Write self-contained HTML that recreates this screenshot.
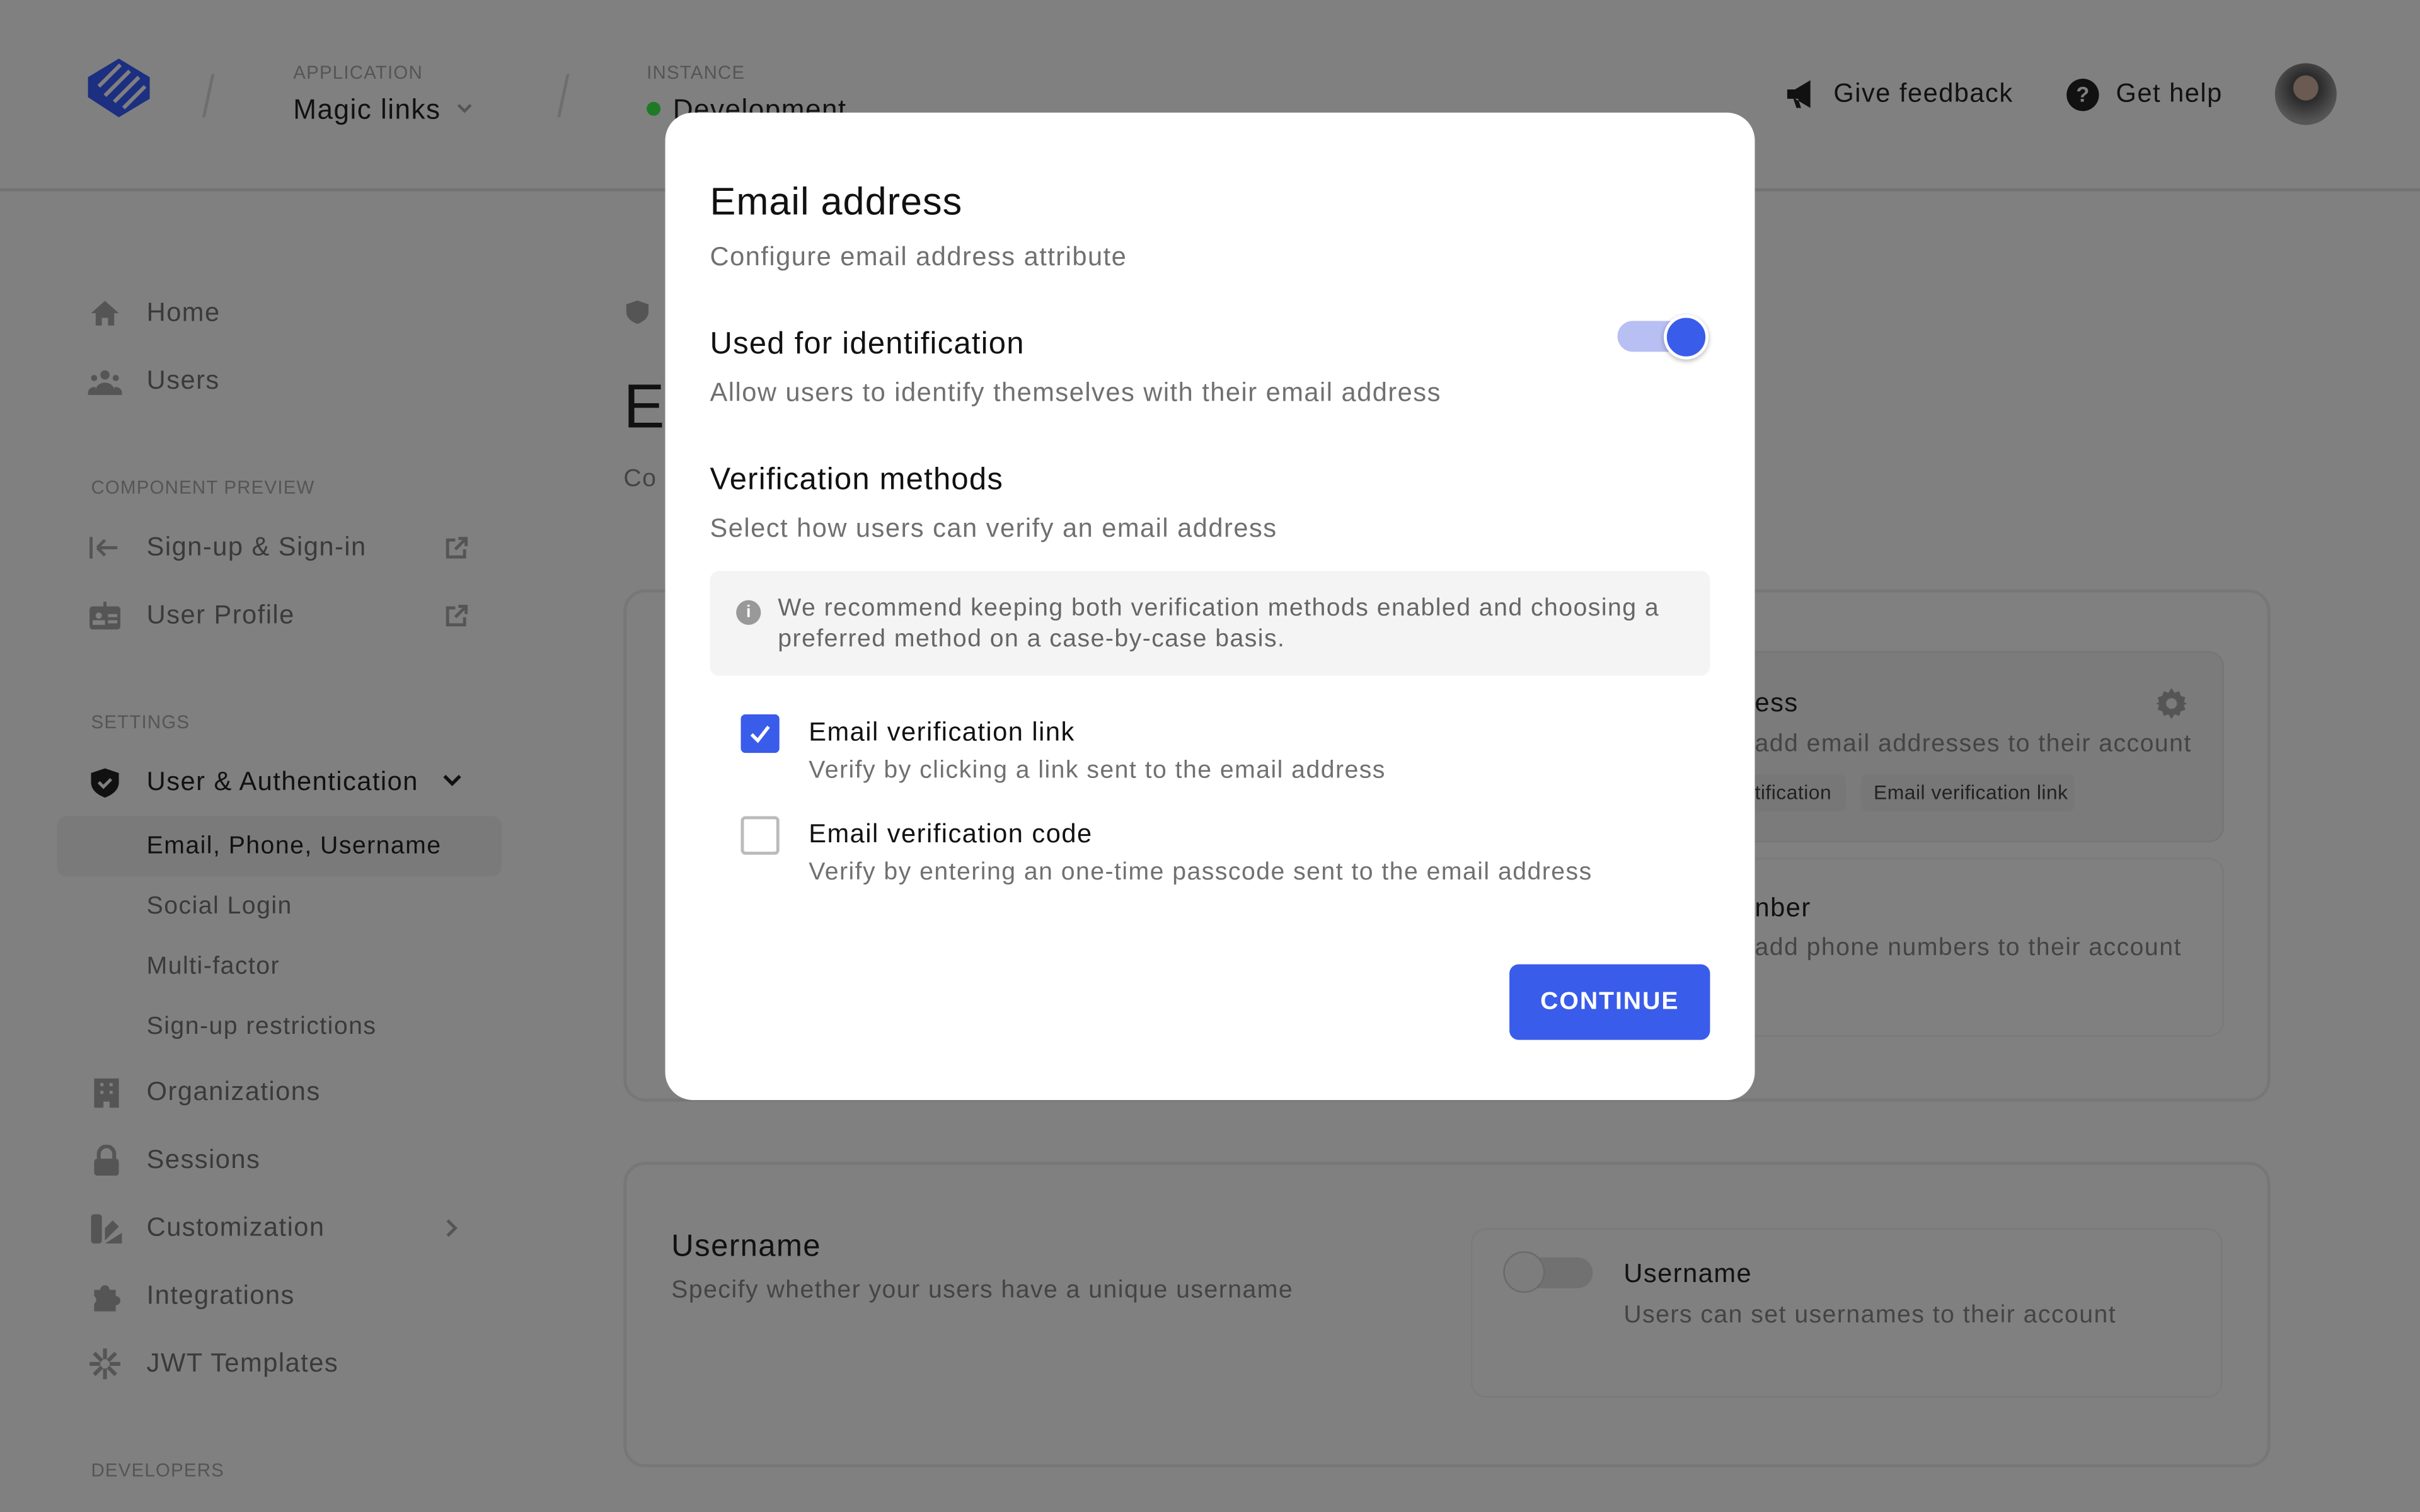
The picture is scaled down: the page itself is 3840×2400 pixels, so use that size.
<!DOCTYPE html>
<html><head><meta charset="utf-8"><style>
*{box-sizing:border-box;margin:0;padding:0}
html,body{width:3840px;height:2400px;overflow:hidden;background:#808080}
#s{position:absolute;left:0;top:0;width:1568px;height:980px;transform:scale(2.44898);transform-origin:0 0;font-family:"Liberation Sans",sans-serif;background:#808080;color:#111;letter-spacing:.6px}
.a{position:absolute;white-space:nowrap}
.nav{font-size:17px;color:#3a3a3a;margin-top:1px}
.lab{font-size:12px;color:#555;letter-spacing:.5px}
.ic{position:absolute;width:20px;height:20px;fill:#555}
.sub{font-size:16px;color:#3a3a3a;margin-top:1px}
.card{position:absolute;border:2px solid #777;border-radius:14px}
.m{font-size:17px;margin-top:1px}
.g{color:#707070}
</style></head><body><div id="s">
<!-- header -->
<div class="a" style="left:0;top:122px;width:1568px;height:2px;background:#737373"></div>
<svg class="a" style="left:56px;top:36px" width="42" height="42" viewBox="0 0 42 42"><path d="M21 2 L41 14 V28 L21 40 L1 27 V14 Z" fill="#1c2f80"/><path d="M8 20 L22 6 M12 26 L28 10 M18 30 L34 14 M24 34 L38 20" stroke="#7f7f7f" stroke-width="2.5"/></svg>
<div class="a" style="left:134px;top:48px;width:2px;height:28px;background:#6e6e6e;transform:skewX(-12deg)"></div>
<div class="a" style="left:364px;top:48px;width:2px;height:28px;background:#6e6e6e;transform:skewX(-12deg)"></div>
<div class="a lab" style="left:190px;top:40px">APPLICATION</div>
<div class="a" style="left:190px;top:61px;font-size:18px;color:#111">Magic links</div>
<svg class="a" style="left:295px;top:66px" width="12" height="8" viewBox="0 0 12 8"><path d="M2 2l4 4 4-4" stroke="#555" stroke-width="1.8" fill="none"/></svg>
<div class="a lab" style="left:419px;top:40px">INSTANCE</div>
<div class="a" style="left:419px;top:66px;width:9px;height:9px;border-radius:50%;background:#1e7a24"></div>
<div class="a" style="left:436px;top:61px;font-size:18px;color:#111">Development</div>
<svg class="a" style="left:1156px;top:51px" width="22" height="20" viewBox="0 0 22 20"><path d="M2 7h5l10-6v18L7 13H2z M6 13l2 6h3l-2-6z" fill="#111"/></svg>
<div class="a" style="left:1188px;top:51px;font-size:17px;color:#111">Give feedback</div>
<div class="a" style="left:1339px;top:51px;width:21px;height:21px;border-radius:50%;background:#111;color:#808080;font-size:14px;font-weight:bold;text-align:center;line-height:21px;letter-spacing:0">?</div>
<div class="a" style="left:1371px;top:51px;font-size:17px;color:#111">Get help</div>
<div class="a" style="left:1474px;top:41px;width:40px;height:40px;border-radius:50%;background:radial-gradient(circle at 50% 40%,#6b5a52 0 25%,#2a2a2a 27%,#555 70%)"></div>
<!-- sidebar -->
<svg class="ic" style="left:58px;top:193px" viewBox="0 0 20 20"><path d="M10 2L1 10h3v8h4v-5h4v5h4v-8h3z"/></svg>
<div class="a nav" style="left:95px;top:192px">Home</div>
<svg class="ic" style="left:57px;top:237px;width:22px" viewBox="0 0 22 20"><circle cx="11" cy="6" r="3"/><circle cx="4" cy="8" r="2"/><circle cx="18" cy="8" r="2"/><path d="M5 19v-3a6 5 0 0 1 12 0v3zM0 19v-2a4 4 0 0 1 5-3v5zM22 19v-2a4 4 0 0 0-5-3v5z"/></svg>
<div class="a nav" style="left:95px;top:236px">Users</div>
<div class="a lab" style="left:59px;top:309px">COMPONENT PREVIEW</div>
<svg class="ic" style="left:58px;top:345px" viewBox="0 0 20 20"><path d="M1 3v14" stroke="#555" stroke-width="2"/><path d="M5 10h13M5 10l5-5M5 10l5 5" stroke="#555" stroke-width="2" fill="none"/></svg>
<div class="a nav" style="left:95px;top:344px">Sign-up &amp; Sign-in</div>
<svg class="ic" style="left:288px;top:347px;width:16px;height:16px" viewBox="0 0 16 16"><path d="M7 3H2v11h11V9M9 2h5v5M14 2L7 9" stroke="#555" stroke-width="2" fill="none"/></svg>
<svg class="ic" style="left:58px;top:389px" viewBox="0 0 20 20"><rect x="0" y="4" width="20" height="15" rx="2"/><rect x="9" y="1" width="2" height="4"/><circle cx="6" cy="10" r="2" fill="#808080"/><rect x="2" y="13" width="8" height="3" fill="#808080"/><rect x="12" y="9" width="6" height="2" fill="#808080"/><rect x="12" y="13" width="6" height="2" fill="#808080"/></svg>
<div class="a nav" style="left:95px;top:388px">User Profile</div>
<svg class="ic" style="left:288px;top:391px;width:16px;height:16px" viewBox="0 0 16 16"><path d="M7 3H2v11h11V9M9 2h5v5M14 2L7 9" stroke="#555" stroke-width="2" fill="none"/></svg>
<div class="a lab" style="left:59px;top:461px">SETTINGS</div>
<svg class="ic" style="left:58px;top:497px;fill:#111" viewBox="0 0 20 20"><path d="M10 1l9 3v6c0 5-4 8-9 10C5 18 1 15 1 10V4z"/><path d="M6 10l3 3 5-5" stroke="#808080" stroke-width="2" fill="none"/></svg>
<div class="a nav" style="left:95px;top:496px;color:#111">User &amp; Authentication</div>
<svg class="a" style="left:286px;top:501px" width="14" height="10" viewBox="0 0 14 10"><path d="M2 2l5 5 5-5" stroke="#111" stroke-width="2.2" fill="none"/></svg>
<div class="a" style="left:37px;top:529px;width:288px;height:39px;border-radius:6px;background:#7a7a7a"></div>
<div class="a sub" style="left:95px;top:539px;color:#111">Email, Phone, Username</div>
<div class="a sub" style="left:95px;top:578px">Social Login</div>
<div class="a sub" style="left:95px;top:617px">Multi-factor</div>
<div class="a sub" style="left:95px;top:656px">Sign-up restrictions</div>
<svg class="ic" style="left:59px;top:698px" viewBox="0 0 20 20"><path d="M2 1h16v19h-6v-4H8v4H2z"/><g fill="#808080"><rect x="6" y="4" width="2" height="2"/><rect x="12" y="4" width="2" height="2"/><rect x="6" y="9" width="2" height="2"/><rect x="12" y="9" width="2" height="2"/></g></svg>
<div class="a nav" style="left:95px;top:697px">Organizations</div>
<svg class="ic" style="left:59px;top:742px" viewBox="0 0 20 20"><path d="M5 9V6a5 5 0 0 1 10 0v3" stroke="#555" stroke-width="2.5" fill="none"/><rect x="2" y="9" width="16" height="11" rx="2"/></svg>
<div class="a nav" style="left:95px;top:741px">Sessions</div>
<svg class="ic" style="left:59px;top:786px" viewBox="0 0 20 20"><rect x="0" y="1" width="7" height="19" rx="2"/><path d="M9 18l9-9-4-4-5 5zM9 20h11v-7z"/></svg>
<div class="a nav" style="left:95px;top:785px">Customization</div>
<svg class="a" style="left:288px;top:789px" width="10" height="14" viewBox="0 0 10 14"><path d="M2 2l5 5-5 5" stroke="#555" stroke-width="2" fill="none"/></svg>
<svg class="ic" style="left:59px;top:830px" viewBox="0 0 20 20"><path d="M2 6h4a3 3 0 0 1 6 0h4v4a3 3 0 0 1 0 6v4H2v-5a3 3 0 0 0 0-5z"/></svg>
<div class="a nav" style="left:95px;top:829px">Integrations</div>
<svg class="ic" style="left:58px;top:874px" viewBox="0 0 20 20"><g stroke="#555" stroke-width="2.5"><path d="M10 0v7M10 13v7M0 10h7M13 10h7M3 3l5 5M12 12l5 5M17 3l-5 5M8 12l-5 5"/></g></svg>
<div class="a nav" style="left:95px;top:873px">JWT Templates</div>
<div class="a lab" style="left:59px;top:946px">DEVELOPERS</div>
<!-- main background -->
<svg class="a" style="left:405px;top:194px" width="16" height="16" viewBox="0 0 20 20"><path d="M10 1l9 3v6c0 5-4 8-9 10C5 18 1 15 1 10V4z" fill="#555"/></svg>
<div class="a" style="left:404px;top:242px;font-size:40px;color:#111">E</div>
<div class="a" style="left:404px;top:302px;font-size:16px;color:#444">Co</div>
<div class="card" style="left:404px;top:382px;width:1067px;height:332px"></div>
<div class="a" style="left:1120px;top:422px;width:321px;height:124px;background:#7b7b7b;border:1px solid #767676;border-radius:10px"></div>
<div class="a" style="left:1137px;top:446px;font-size:17px;color:#111">ess</div>
<svg class="a" style="left:1397px;top:446px" width="20" height="20" viewBox="0 0 20 20"><path d="M10 0l2 3 3-1 1 3 3 1-1 3 2 1-2 1 1 3-3 1-1 3-3-1-2 3-2-3-3 1-1-3-3-1 1-3-2-1 2-1-1-3 3-1 1-3 3 1z" fill="#555"/><circle cx="10" cy="10" r="3.5" fill="#7b7b7b"/></svg>
<div class="a" style="left:1137px;top:474px;font-size:16px;color:#444">add email addresses to their account</div>
<div class="a" style="left:1130px;top:502px;width:66px;height:24px;background:#777;border-radius:4px"></div>
<div class="a" style="left:1137px;top:506px;font-size:13px;color:#222;letter-spacing:.2px">tification</div>
<div class="a" style="left:1206px;top:502px;width:138px;height:24px;background:#777;border-radius:4px"></div>
<div class="a" style="left:1214px;top:506px;font-size:13px;color:#222;letter-spacing:.2px">Email verification link</div>
<div class="a" style="left:1120px;top:556px;width:321px;height:116px;border:1px solid #7a7a7a;border-radius:10px"></div>
<div class="a" style="left:1137px;top:579px;font-size:17px;color:#111">nber</div>
<div class="a" style="left:1137px;top:606px;font-size:16px;color:#444">add phone numbers to their account</div>
<div class="card" style="left:404px;top:753px;width:1067px;height:198px"></div>
<div class="a" style="left:435px;top:797px;font-size:20px;color:#111">Username</div>
<div class="a" style="left:435px;top:828px;font-size:16px;color:#444">Specify whether your users have a unique username</div>
<div class="a" style="left:953px;top:796px;width:487px;height:110px;border:1px solid #7a7a7a;border-radius:10px"></div>
<div class="a" style="left:974px;top:815px;width:58px;height:20px;border-radius:10px;background:#717171"></div>
<div class="a" style="left:974px;top:811px;width:27px;height:27px;border-radius:50%;background:#7d7d7d;border:1px solid #6a6a6a"></div>
<div class="a" style="left:1052px;top:816px;font-size:17px;color:#111">Username</div>
<div class="a" style="left:1052px;top:844px;font-size:16px;color:#444">Users can set usernames to their account</div>
<!-- modal -->
<div class="a" style="left:431px;top:73px;width:706px;height:640px;background:#fff;border-radius:18px"></div>
<div class="a" style="left:460px;top:117px;font-size:25px;color:#111;letter-spacing:.4px">Email address</div>
<div class="a m g" style="left:460px;top:156px">Configure email address attribute</div>
<div class="a" style="left:460px;top:212px;font-size:20px;color:#111;letter-spacing:.5px">Used for identification</div>
<div class="a m g" style="left:460px;top:244px">Allow users to identify themselves with their email address</div>
<div class="a" style="left:1048px;top:208px;width:56px;height:20px;border-radius:10px;background:#b8bff3"></div>
<div class="a" style="left:1078px;top:204px;width:29px;height:29px;border-radius:50%;background:#3a5cea;border:2px solid #fff;box-shadow:0 1px 3px rgba(0,0,0,.3)"></div>
<div class="a" style="left:460px;top:300px;font-size:20px;color:#111;letter-spacing:.5px">Verification methods</div>
<div class="a m g" style="left:460px;top:332px">Select how users can verify an email address</div>
<div class="a" style="left:460px;top:370px;width:648px;height:68px;background:#f4f4f4;border-radius:6px"></div>
<div class="a" style="left:477px;top:389px;width:16px;height:16px;border-radius:50%;background:#999;color:#fff;font-size:11px;font-weight:bold;text-align:center;line-height:16px;letter-spacing:0">i</div>
<div class="a" style="left:504px;top:385px;font-size:16px;color:#666;line-height:20px;white-space:normal;width:600px">We recommend keeping both verification methods enabled and choosing a preferred method on a case-by-case basis.</div>
<div class="a" style="left:480px;top:463px;width:25px;height:25px;border-radius:3px;background:#3a5cea"></div>
<svg class="a" style="left:484px;top:467px" width="17" height="17" viewBox="0 0 17 17"><path d="M3 9l4 4 7-9" stroke="#fff" stroke-width="2.2" fill="none"/></svg>
<div class="a" style="left:524px;top:465px;font-size:17px;color:#111">Email verification link</div>
<div class="a g" style="left:524px;top:491px;font-size:16px">Verify by clicking a link sent to the email address</div>
<div class="a" style="left:480px;top:529px;width:25px;height:25px;border-radius:3px;border:2px solid #bbb"></div>
<div class="a" style="left:524px;top:531px;font-size:17px;color:#111">Email verification code</div>
<div class="a g" style="left:524px;top:557px;font-size:16px">Verify by entering an one-time passcode sent to the email address</div>
<div class="a" style="left:978px;top:625px;width:130px;height:49px;border-radius:6px;background:#3a5cea;color:#fff;font-size:16px;font-weight:bold;letter-spacing:.8px;text-align:center;line-height:49px">CONTINUE</div>
</div></body></html>
